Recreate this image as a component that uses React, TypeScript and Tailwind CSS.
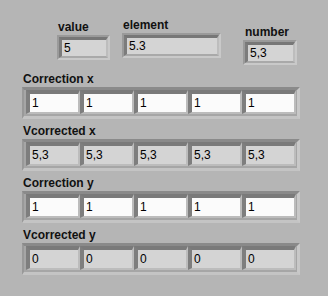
const font = { fontFamily: '"Liberation Sans", Arial, sans-serif' };

function NumBox({ w, fill, text }: { w: string; fill: string; text: string }) {
  return (
    <div className={`${w} h-[25px] border-2 border-t-[#9a9a9a] border-l-[#9a9a9a] border-b-[#c9c9c9] border-r-[#c9c9c9]`}>
      <div className="h-full border-t-[3px] border-l-[3px] border-r-[2px] border-b-[2px] border-t-[#777777] border-l-[#7c7c7c] border-r-[#bdbdbd] border-b-[#a9a9a9]">
        <div className={`h-full ${fill} pl-[2px] text-[12px] leading-[16px] text-black`}>{text}</div>
      </div>
    </div>
  );
}

function Cell({ fill, text }: { fill: string; text: string }) {
  return (
    <div className="w-[54px] h-[24px] border-t-[4px] border-l-[4px] border-r-[2px] border-b-[2px] border-t-[#7a7a7a] border-l-[#7e7e7e] border-r-[#bcbcbc] border-b-[#bcbcbc]">
      <div className={`h-full ${fill} pl-[2px] text-[12px] leading-[18px] text-black`}>{text}</div>
    </div>
  );
}

function ArrayRow({ label, fill, value }: { label: string; fill: string; value: string }) {
  return (
    <div className="flex flex-col">
      <div className="pl-[1px] text-[12px] leading-[14px] font-bold text-[#111]">{label}</div>
      <div className="mt-[1px] w-[278px] h-[32px] border-t-[3px] border-l-[2px] border-r-[3px] border-b-[3px] border-t-[#8a8a8a] border-l-[#999999] border-r-[#c8c8c8] border-b-[#c4c4c4] bg-[#a6a6a6] pl-[2px]">
        <div className="flex">
          {[0, 1, 2, 3, 4].map((i) => (
            <Cell key={i} fill={fill} text={value} />
          ))}
        </div>
      </div>
    </div>
  );
}

export default function App() {
  return (
    <div className="w-[328px] h-[296px] bg-[#b5b5b5] overflow-hidden" style={font}>
      <div className="flex items-start">
        <div className="ml-[57px] mt-[20px] flex flex-col">
          <div className="pl-[1px] text-[12px] leading-[14px] font-bold text-[#111]">value</div>
          <div className="mt-[1px]">
            <NumBox w="w-[53px]" fill="bg-[#d4d4d4]" text="5" />
          </div>
        </div>
        <div className="ml-[12px] mt-[18px] flex flex-col">
          <div className="pl-[1px] text-[12px] leading-[14px] font-bold text-[#111]">element</div>
          <div className="mt-[1px]">
            <NumBox w="w-[99px]" fill="bg-[#d4d4d4]" text="5.3" />
          </div>
        </div>
        <div className="ml-[22px] mt-[25px] flex flex-col">
          <div className="pl-[2px] text-[12px] leading-[14px] font-bold text-[#111]">number</div>
          <div className="mt-[1px]">
            <NumBox w="w-[54px]" fill="bg-[#d4d4d4]" text="5,3" />
          </div>
        </div>
      </div>
      <div className="ml-[22px] mt-[7px] flex flex-col gap-[5px]">
        <ArrayRow label="Correction x" fill="bg-[#fbfbfb]" value="1" />
        <ArrayRow label="Vcorrected x" fill="bg-[#d4d4d4]" value="5,3" />
        <ArrayRow label="Correction y" fill="bg-[#fbfbfb]" value="1" />
        <ArrayRow label="Vcorrected y" fill="bg-[#d4d4d4]" value="0" />
      </div>
    </div>
  );
}
